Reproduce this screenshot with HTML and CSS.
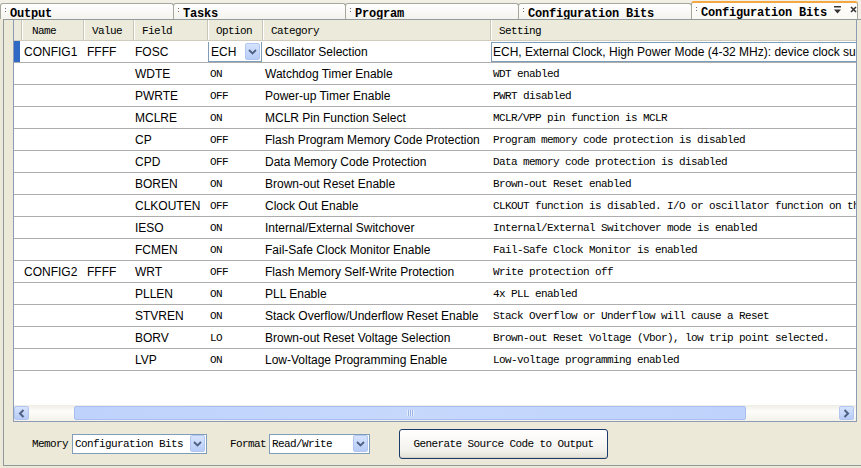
FILE: index.html
```html
<!DOCTYPE html>
<html>
<head>
<meta charset="utf-8">
<link rel="stylesheet" href="styles.css">
</head>
<body>
<div class="tabs">
  <div class="tab t1"><span class="grip"></span>Output</div>
  <div class="tab t2"><span class="grip"></span>Tasks</div>
  <div class="tab t3"><span class="grip"></span>Program</div>
  <div class="tab t4"><span class="grip"></span>Configuration Bits</div>
  <div class="tab active"><span class="grip"></span>Configuration Bits
    <span class="tab-icons">
      <svg width="9" height="8" viewBox="0 0 9 8"><rect x="1" y="0" width="7" height="1.5" fill="#333"/><path d="M1 3.5h7L4.5 7.5z" fill="#333"/></svg>
      <svg width="7" height="7" viewBox="0 0 7 7"><path d="M1 1l5 5M6 1l-5 5" stroke="#333" stroke-width="1.6"/></svg>
    </span>
  </div>
</div>
<div class="panel">
  <div class="grid">
    <div class="head">
      <div class="mark"></div>
      <div class="hc c-name">Name</div>
      <div class="hc c-value">Value</div>
      <div class="hc c-field">Field</div>
      <div class="hc c-option">Option</div>
      <div class="hc c-cat">Category</div>
      <div class="hc c-set">Setting</div>
    </div>
    <div class="rows">
      <div class="row">
        <div class="mark sel"></div>
        <div class="c c-name">CONFIG1</div>
        <div class="c c-value">FFFF</div>
        <div class="c c-field">FOSC</div>
        <div class="c c-option"><div class="cell-combo"><span>ECH</span><span class="dd"><svg width="9" height="6" viewBox="0 0 9 6"><path d="M1 1l3.5 3.5L8 1" fill="none" stroke="#4D6185" stroke-width="1.8"/></svg></span></div></div>
        <div class="c c-cat">Oscillator Selection</div>
        <div class="c c-set"><div class="cell-edit">ECH, External Clock, High Power Mode (4-32 MHz): device clock supplied to CLKIN pin</div></div>
      </div>
      <div class="row"><div class="mark"></div><div class="c c-name"></div><div class="c c-value"></div><div class="c c-field">WDTE</div><div class="c c-option mono">ON</div><div class="c c-cat">Watchdog Timer Enable</div><div class="c c-set mono">WDT enabled</div></div>
      <div class="row"><div class="mark"></div><div class="c c-name"></div><div class="c c-value"></div><div class="c c-field">PWRTE</div><div class="c c-option mono">OFF</div><div class="c c-cat">Power-up Timer Enable</div><div class="c c-set mono">PWRT disabled</div></div>
      <div class="row"><div class="mark"></div><div class="c c-name"></div><div class="c c-value"></div><div class="c c-field">MCLRE</div><div class="c c-option mono">ON</div><div class="c c-cat">MCLR Pin Function Select</div><div class="c c-set mono">MCLR/VPP pin function is MCLR</div></div>
      <div class="row"><div class="mark"></div><div class="c c-name"></div><div class="c c-value"></div><div class="c c-field">CP</div><div class="c c-option mono">OFF</div><div class="c c-cat">Flash Program Memory Code Protection</div><div class="c c-set mono">Program memory code protection is disabled</div></div>
      <div class="row"><div class="mark"></div><div class="c c-name"></div><div class="c c-value"></div><div class="c c-field">CPD</div><div class="c c-option mono">OFF</div><div class="c c-cat">Data Memory Code Protection</div><div class="c c-set mono">Data memory code protection is disabled</div></div>
      <div class="row"><div class="mark"></div><div class="c c-name"></div><div class="c c-value"></div><div class="c c-field">BOREN</div><div class="c c-option mono">ON</div><div class="c c-cat">Brown-out Reset Enable</div><div class="c c-set mono">Brown-out Reset enabled</div></div>
      <div class="row"><div class="mark"></div><div class="c c-name"></div><div class="c c-value"></div><div class="c c-field">CLKOUTEN</div><div class="c c-option mono">OFF</div><div class="c c-cat">Clock Out Enable</div><div class="c c-set mono">CLKOUT function is disabled. I/O or oscillator function on the CLKOUT pin</div></div>
      <div class="row"><div class="mark"></div><div class="c c-name"></div><div class="c c-value"></div><div class="c c-field">IESO</div><div class="c c-option mono">ON</div><div class="c c-cat">Internal/External Switchover</div><div class="c c-set mono">Internal/External Switchover mode is enabled</div></div>
      <div class="row"><div class="mark"></div><div class="c c-name"></div><div class="c c-value"></div><div class="c c-field">FCMEN</div><div class="c c-option mono">ON</div><div class="c c-cat">Fail-Safe Clock Monitor Enable</div><div class="c c-set mono">Fail-Safe Clock Monitor is enabled</div></div>
      <div class="row"><div class="mark"></div><div class="c c-name">CONFIG2</div><div class="c c-value">FFFF</div><div class="c c-field">WRT</div><div class="c c-option mono">OFF</div><div class="c c-cat">Flash Memory Self-Write Protection</div><div class="c c-set mono">Write protection off</div></div>
      <div class="row"><div class="mark"></div><div class="c c-name"></div><div class="c c-value"></div><div class="c c-field">PLLEN</div><div class="c c-option mono">ON</div><div class="c c-cat">PLL Enable</div><div class="c c-set mono">4x PLL enabled</div></div>
      <div class="row"><div class="mark"></div><div class="c c-name"></div><div class="c c-value"></div><div class="c c-field">STVREN</div><div class="c c-option mono">ON</div><div class="c c-cat">Stack Overflow/Underflow Reset Enable</div><div class="c c-set mono">Stack Overflow or Underflow will cause a Reset</div></div>
      <div class="row"><div class="mark"></div><div class="c c-name"></div><div class="c c-value"></div><div class="c c-field">BORV</div><div class="c c-option mono">LO</div><div class="c c-cat">Brown-out Reset Voltage Selection</div><div class="c c-set mono">Brown-out Reset Voltage (Vbor), low trip point selected.</div></div>
      <div class="row"><div class="mark"></div><div class="c c-name"></div><div class="c c-value"></div><div class="c c-field">LVP</div><div class="c c-option mono">ON</div><div class="c c-cat">Low-Voltage Programming Enable</div><div class="c c-set mono">Low-voltage programming enabled</div></div>
    </div>
    <div class="filler"></div>
    <div class="hscroll">
      <div class="sbtn"><svg width="7" height="9" viewBox="0 0 7 9"><path d="M5.5 1L2 4.5 5.5 8" fill="none" stroke="#4D6185" stroke-width="2"/></svg></div>
      <div class="strack-l"></div>
      <div class="thumb"><span class="gripl"></span></div>
      <div class="strack-r"></div>
      <div class="sbtn"><svg width="7" height="9" viewBox="0 0 7 9"><path d="M1.5 1L5 4.5 1.5 8" fill="none" stroke="#4D6185" stroke-width="2"/></svg></div>
    </div>
  </div>
  <div class="toolbar">
    <span class="lbl">Memory</span>
    <div class="combo w-mem"><span>Configuration Bits</span><span class="dd"><svg width="9" height="6" viewBox="0 0 9 6"><path d="M1 1l3.5 3.5L8 1" fill="none" stroke="#4D6185" stroke-width="1.8"/></svg></span></div>
    <span class="lbl lbl-fmt">Format</span>
    <div class="combo w-fmt"><span>Read/Write</span><span class="dd"><svg width="9" height="6" viewBox="0 0 9 6"><path d="M1 1l3.5 3.5L8 1" fill="none" stroke="#4D6185" stroke-width="1.8"/></svg></span></div>
    <button class="btn">Generate Source Code to Output</button>
  </div>
</div>
</body>
</html>
```

FILE: styles.css
```css
* { box-sizing: border-box; margin: 0; padding: 0; }
html, body { width: 861px; height: 468px; overflow: hidden; }
body {
  background: #ECE9D8;
  font-family: "Liberation Sans", Arial, sans-serif;
  font-size: 12px;
  color: #000;
}
.mono {
  font-family: "Liberation Mono", "Courier New", monospace;
  font-size: 11px;
  letter-spacing: -0.6px;
}

/* Tabs */
.tabs {
  display: flex;
  align-items: flex-end;
  height: 19px;
  background: #F1EFE6;
}
.tab {
  position: relative;
  height: 16px;
  border: 1px solid #A5A89B;
  border-bottom: none;
  border-radius: 3px 3px 0 0;
  background: linear-gradient(#FFFFFF, #F4F3EE);
  font-family: "Liberation Mono", "Courier New", monospace;
  font-weight: bold;
  font-size: 12px;
  letter-spacing: -0.2px;
  line-height: 12px;
  padding: 4px 0 0 9px;
  overflow: hidden;
  white-space: nowrap;
  margin-right: -1px;
}
.t1 { width: 174px; }
.t2 { width: 173px; }
.t3 { width: 174px; }
.t4 { width: 174px; }
.tab.active {
  flex: 1;
  height: 18px;
  padding-top: 4px;
  border-top: 2px solid #F3A843;
  background: linear-gradient(#FFFFFF, #FAF9F4);
  margin-right: 3px;
}
.grip {
  position: absolute;
  left: 4px;
  top: 4px;
  width: 1px;
  height: 5px;
  background: repeating-linear-gradient(#6E6E6E 0 1px, transparent 1px 3px);
}
.tab-icons {
  position: absolute;
  right: 0;
  top: 3px;
  display: flex;
  gap: 8px;
  align-items: flex-start;
}

/* Panel */
.panel {
  margin-left: 3px;
  height: 447px;
  border-left: 1px solid #919B9C;
  border-top: 1px solid #919B9C;
  border-bottom: 1px solid #919B9C;
  display: flex;
  flex-direction: column;
}
.grid {
  margin-left: 9px;
  width: 844px;
  height: 402px;
  border: 1px solid #8C9CB4;
  border-top: none;
  background: #fff;
  display: flex;
  flex-direction: column;
}
.head {
  display: flex;
  flex: none;
  height: 21px;
  background: #EBEADB;
  border-bottom: 1px solid #CFCCBD;
  font-family: "Liberation Mono", "Courier New", monospace;
  font-size: 11px;
  letter-spacing: -0.6px;
  line-height: 18px;
  padding-top: 2px;
}
.hc {
  border-left: 1px solid #C9C6B5;
  box-shadow: inset 1px 0 0 #fff;
  padding-left: 8px;
  white-space: nowrap;
  overflow: hidden;
  margin-top: -2px;
  padding-top: 2px;
}
.head .c-name { padding-left: 10px; }
.mark { width: 7px; flex: none; }
.c-name { width: 62px; flex: none; }
.c-value { width: 50px; flex: none; }
.c-field { width: 74px; flex: none; }
.c-option { width: 55px; flex: none; }
.c-cat { width: 228px; flex: none; }
.c-set { flex: 1; min-width: 0; }

.rows { display: flex; flex-direction: column; flex: none; }
.row {
  display: flex;
  align-items: center;
  height: 22px;
  padding-top: 1px;
  border-bottom: 1px solid #ADADAD;
}
.row .mark { align-self: stretch; margin-top: -1px; }
.mark.sel { background: #316AC5; width: 6px; margin-right: 1px; }
.c { white-space: nowrap; overflow: hidden; }
.row .c-name { padding-left: 3px; }
.row .c-value { padding-left: 4px; }
.row .c-field { padding-left: 2px; }
.row .c-option { padding-left: 3px; }
.row .c-cat { padding-left: 3px; }
.row .c-set { padding-left: 3px; }

.cell-combo {
  margin-left: -1px;
  margin-top: -1px;
  height: 21px;
  width: 54px;
  border: 1px solid #7F9DB9;
  display: flex;
  align-items: center;
  justify-content: space-between;
  padding-left: 2px;
  padding-right: 1px;
}
.row .c-option:has(.cell-combo) { padding-left: 2px; }
.dd {
  width: 15px;
  height: 17px;
  background: linear-gradient(#D6E3FD, #B7CCF7);
  border: 1px solid #B2C6F2;
  border-radius: 2px;
  display: flex;
  align-items: center;
  justify-content: center;
}
.row .c-set:has(.cell-edit) { padding-left: 1px; align-self: stretch; }
.cell-edit {
  height: 20px;
  border: 1px solid #7F9DB9;
  border-right: none;
  padding-left: 1px;
  line-height: 18px;
  white-space: nowrap;
  overflow: hidden;
}

.filler { flex: 1; }

/* Horizontal scrollbar */
.hscroll {
  height: 16px;
  flex: none;
  display: flex;
  align-items: stretch;
  background: linear-gradient(#EEEDE5, #FDFDFA 40%, #F3F1EA);
  padding: 1px 2px 1px 0;
}
.sbtn {
  width: 15px;
  flex: none;
  background: linear-gradient(#D6E3FD, #B6CBF6);
  border: 1px solid #B2C6F2;
  border-radius: 2px;
  display: flex;
  align-items: center;
  justify-content: center;
}
.strack-l { width: 45px; flex: none; }
.strack-r { flex: 1; }
.thumb {
  width: 672px;
  flex: none;
  background: linear-gradient(90deg, #BED2FB, #C6D8FC 50%, #BED2FB);
  border: 1px solid #A8BEF0;
  border-radius: 2px;
  display: flex;
  align-items: center;
  justify-content: center;
}
.gripl {
  width: 7px;
  height: 6px;
  background: repeating-linear-gradient(90deg, #E6EEFD 0 1px, #9DB4E8 1px 2px);
}

/* Toolbar */
.toolbar {
  flex: 1;
  display: flex;
  align-items: center;
  padding-left: 28px;
  font-family: "Liberation Mono", "Courier New", monospace;
  font-size: 11px;
  letter-spacing: -0.6px;
}
.lbl { margin-right: 4px; }
.lbl-fmt { margin-left: 23px; margin-right: 3px; }
.combo {
  height: 20px;
  border: 1px solid #7F9DB9;
  background: #fff;
  display: flex;
  align-items: center;
  justify-content: space-between;
  padding-left: 2px;
  padding-right: 1px;
}
.w-mem { width: 135px; }
.w-fmt { width: 101px; }
.btn {
  margin-left: 29px;
  width: 209px;
  height: 30px;
  border: 1px solid #1C3A6B;
  border-radius: 3px;
  background: linear-gradient(#FFFFFF, #F4F3EE 70%, #E3E1D6);
  box-shadow: inset 0 -1px 0 #D6D0C5;
  font-family: "Liberation Mono", "Courier New", monospace;
  font-size: 11px;
  letter-spacing: -0.6px;
  color: #000;
}
```
